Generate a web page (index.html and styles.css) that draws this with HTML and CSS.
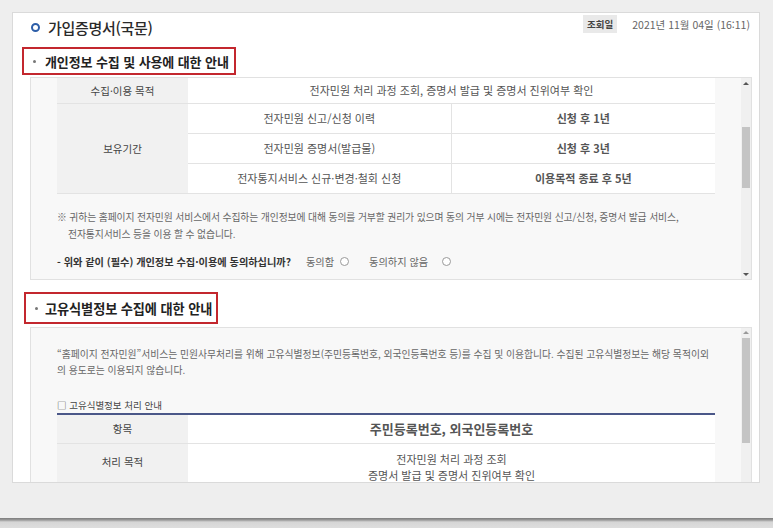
FILE: index.html
```html
<!DOCTYPE html>
<html lang="ko">
<head>
<meta charset="utf-8">
<title>가입증명서(국문)</title>
<link rel="stylesheet" href="styles.css">
</head>
<body>
<div class="frame">
  <div class="card">
    <div class="head">
      <h1 class="title"><span class="ring"></span>가입증명서(국문)</h1>
      <div class="query"><span class="query-label">조회일</span><span class="query-date">2021년 11월 04일 (16:11)</span></div>
    </div>

    <h2 class="sec-title sec-title-1"><span class="dot"></span>개인정보 수집 및 사용에 대한 안내</h2>
    <div class="panel panel-1">
      <div class="panel-body">
        <table class="info">
          <colgroup><col class="c-h"><col class="c-m"><col class="c-r"></colgroup>
          <tr class="r1"><th>수집·이용 목적</th><td colspan="2">전자민원 처리 과정 조회, 증명서 발급 및 증명서 진위여부 확인</td></tr>
          <tr class="r2"><th rowspan="3">보유기간</th><td>전자민원 신고/신청 이력</td><td class="val">신청 후 1년</td></tr>
          <tr class="r2"><td>전자민원 증명서(발급물)</td><td class="val">신청 후 3년</td></tr>
          <tr class="r2"><td>전자통지서비스 신규·변경·철회 신청</td><td class="val">이용목적 종료 후 5년</td></tr>
        </table>
        <p class="note">※ 귀하는 홈페이지 전자민원 서비스에서 수집하는 개인정보에 대해 동의를 거부할 권리가 있으며 동의 거부 시에는 전자민원 신고/신청, 증명서 발급 서비스, 전자통지서비스 등을 이용 할 수 없습니다.</p>
        <div class="agree">
          <span class="agree-q">- 위와 같이 (필수) 개인정보 수집·이용에 동의하십니까?</span>
          <span class="opt">동의함</span><span class="radio"></span>
          <span class="opt opt-2">동의하지 않음</span><span class="radio"></span>
        </div>
      </div>
      <div class="sbar">
        <span class="arr up"></span>
        <span class="thumb thumb-1"></span>
        <span class="arr down"></span>
      </div>
    </div>

    <h2 class="sec-title sec-title-2"><span class="dot"></span>고유식별정보 수집에 대한 안내</h2>
    <div class="panel panel-2">
      <div class="panel-body">
        <p class="lead">“홈페이지 전자민원”서비스는 민원사무처리를 위해 고유식별정보(주민등록번호, 외국인등록번호 등)를 수집 및 이용합니다. 수집된 고유식별정보는 해당 목적이외의 용도로는 이용되지 않습니다.</p>
        <p class="sub">□ 고유식별정보 처리 안내</p>
        <table class="info info-2">
          <colgroup><col class="c-h"><col class="c-m"><col class="c-r"></colgroup>
          <tr class="q1"><th>항목</th><td colspan="2" class="val val-lg">주민등록번호, 외국인등록번호</td></tr>
          <tr class="q2"><th>처리 목적</th><td colspan="2">전자민원 처리 과정 조회<br>증명서 발급 및 증명서 진위여부 확인</td></tr>
        </table>
      </div>
      <div class="sbar">
        <span class="arr up up-2"></span>
        <span class="thumb thumb-2"></span>
      </div>
    </div>
  </div>
</div>
<div class="frame-edge"></div>
</body>
</html>
```

FILE: styles.css
```css
* { box-sizing: border-box; margin: 0; padding: 0; }
html, body { width: 773px; height: 528px; overflow: hidden; }
body {
  background: #d4d4d4;
  font-family: "Noto Sans CJK KR", "Noto Sans", sans-serif;
  color: #555;
}
.frame {
  height: 518px;
  background: #eeeeee;
  padding: 12px 13px 0 12px;
}
.frame-edge {
  height: 10px;
  background: linear-gradient(#7c7c7c 0, #9a9a9a 2px, #d6d6d6 4px, #dedede 100%);
}
.card {
  width: 748px;
  height: 471px;
  background: #fff;
  border: 1px solid #dadada;
  overflow: hidden;
}

/* header */
.head {
  display: flex;
  justify-content: space-between;
  height: 34px;
  padding: 0 9px 0 18px;
}
.title {
  display: flex;
  align-items: center;
  gap: 8px;
  margin-top: 5px;
  height: 18px;
  font-size: 15px;
  font-weight: 500;
  color: #2a2a2a;
  letter-spacing: -0.3px;
}
.ring {
  width: 9px;
  height: 9px;
  border: 2.5px solid #2d5ea8;
  border-radius: 50%;
}
.query {
  display: flex;
  align-items: center;
  margin-top: 2px;
  height: 18px;
}
.query-label {
  height: 18px;
  line-height: 18px;
  padding: 0 4px;
  margin-left: 2px;
  background: #e9e9e9;
  font-size: 9.5px;
  font-weight: 700;
  color: #444;
}
.query-date {
  margin-left: 15px;
  font-size: 10.5px;
  color: #666;
}

/* section titles */
.sec-title {
  display: flex;
  align-items: center;
  border: 2px solid #c3272e;
  font-weight: 700;
  color: #222;
  white-space: nowrap;
}
.sec-title-1 {
  margin-left: 9px;
  width: 214px;
  height: 28px;
  padding-left: 9px;
  gap: 9px;
  font-size: 13px;
  letter-spacing: -0.1px;
}
.sec-title-2 {
  margin: 12px 0 0 11px;
  width: 194px;
  height: 32px;
  padding-left: 9px;
  gap: 7px;
  font-size: 13.2px;
  letter-spacing: -0.1px;
}
.dot {
  width: 3px;
  height: 3px;
  border-radius: 50%;
  background: #777;
}

/* panels */
.panel {
  display: flex;
  border: 1px solid #e1e1e1;
  background: #f8f8f8;
}
.panel-1 { margin: 2px 7px 0 17px; height: 203px; }
.panel-2 { margin: 3px 7px 0 17px; height: 200px; }
.panel-body {
  flex: 1;
  padding: 0 26px;
  overflow: hidden;
}
.sbar {
  width: 10px;
  background: #f0f0f0;
  display: flex;
  flex-direction: column;
  align-items: center;
}
.arr {
  width: 0;
  height: 0;
  border-left: 3px solid transparent;
  border-right: 3px solid transparent;
}
.arr.up { margin-top: 4px; border-bottom: 3px solid #555; }
.arr.down { margin-top: auto; margin-bottom: 3px; border-top: 3px solid #555; }
.arr.up-2 { margin-top: 3px; border-bottom-color: #999; }
.thumb { width: 8px; background: #c4c4c4; }
.thumb-1 { margin-top: 42px; height: 61px; }
.thumb-2 { margin-top: 4px; height: 105px; }

/* tables */
.info {
  width: 658px;
  border-collapse: collapse;
  table-layout: fixed;
}
.c-h { width: 131px; }
.c-m { width: 263px; }
.c-r { width: 264px; }
.info tr { border-bottom: 1px solid #e3e3e3; }
.info th {
  background: #f1f1f1;
  font-weight: 400;
  font-size: 10.5px;
  color: #444;
}
.info td {
  background: #fff;
  text-align: center;
  font-size: 11px;
  color: #555;
}
.info td + td { border-left: 1px solid #e3e3e3; }
.r1 th, .r1 td { height: 25px; }
.r2 td { height: 30px; }
.val {
  font-size: 12.5px;
  font-weight: 700;
  color: #2f3d6e;
}
.info td.val-lg { font-size: 13px; }

.note {
  margin-top: 15px;
  padding-left: 11px;
  text-indent: -11px;
  font-size: 9.8px;
  letter-spacing: -0.1px;
  line-height: 17px;
  color: #666;
  word-break: keep-all;
}
.agree {
  display: flex;
  align-items: center;
  margin-top: 10px;
  height: 17px;
  font-size: 10.2px;
}
.agree-q { font-weight: 700; color: #333; }
.opt { margin-left: 15px; color: #666; }
.opt-2 { margin-left: 20px; }
.radio {
  width: 9px;
  height: 9px;
  margin-left: 6px;
  border: 1px solid #9a9a9a;
  border-radius: 50%;
  background: #fff;
}
.opt-2 + .radio { margin-left: 14px; }

.lead {
  margin-top: 18px;
  font-size: 9.8px;
  line-height: 16px;
  color: #666;
}
.sub {
  margin-top: 19px;
  font-size: 9.5px;
  line-height: 16px;
  color: #444;
}
.info-2 { border-top: 2px solid #4a5788; }
.q1 th, .q1 td { height: 29px; }
.q2 th, .q2 td { height: 48px; line-height: 16px; }
.q2 th { vertical-align: top; padding-top: 10px; }
```
